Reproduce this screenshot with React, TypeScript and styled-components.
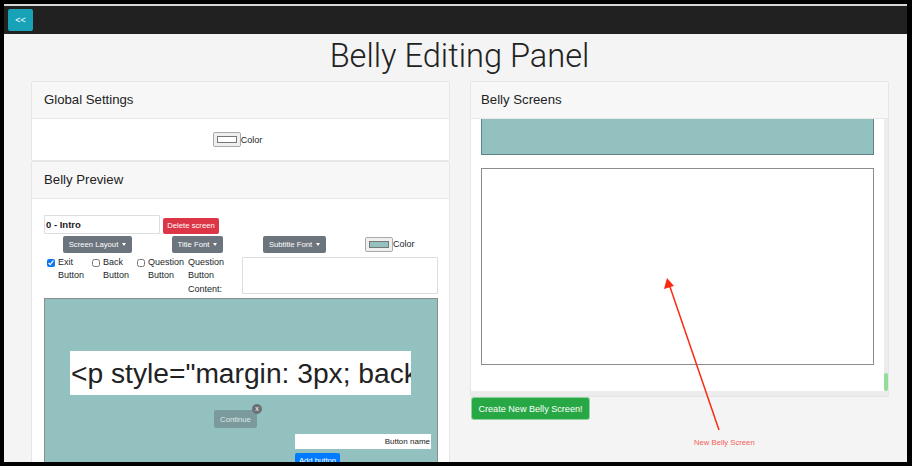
import styled, { createGlobalStyle } from 'styled-components';

const GlobalStyle = createGlobalStyle`
  html, body {
    margin: 0;
    height: 100%;
    background: #000;
    overflow: hidden;
  }
  body {
    font-family: "Liberation Sans", Arial, sans-serif;
    color: #212529;
  }
`;

const Frame = styled.div`
  width: 912px;
  height: 466px;
  box-sizing: border-box;
  padding: 4px 5px 4px 4px;
  background: #000;
`;

const Page = styled.div`
  position: relative;
  height: 100%;
  overflow: hidden;
  background: #f4f4f4;
  border-top: 2px solid #d8d8d8;
  box-sizing: border-box;
`;

const Navbar = styled.div`
  height: 28px;
  background: #212121;
  display: flex;
  align-items: center;
  padding: 0 4px;
  box-sizing: border-box;
`;

const BackButton = styled.button`
  width: 25px;
  height: 22px;
  padding: 0;
  border: 0;
  border-radius: 2px;
  background: #17a2b8;
  color: #fff;
  font: 9px "Liberation Sans", Arial, sans-serif;
`;

const Title = styled.h1`
  margin: 0;
  height: 47px;
  padding-left: 8px;
  text-align: center;
  font-family: Roboto, sans-serif;
  font-weight: 300;
  font-size: 32.6px;
  line-height: 45px;
  color: #222;
`;

const Columns = styled.div`
  display: flex;
  gap: 20px;
  padding-left: 27px;
`;

const Column = styled.div<{ $width: number }>`
  width: ${(p) => p.$width}px;
  flex: none;
`;

const Card = styled.section`
  background: #fff;
  border: 1px solid #e6e6e6;
  border-radius: 2px;
  box-sizing: border-box;
  margin-bottom: 0;
`;

const CardHeader = styled.h2<{ $inset?: number }>`
  margin: 0;
  height: 36px;
  padding-left: ${(p) => p.$inset ?? 12}px;
  background: #f7f7f8;
  border-bottom: 1px solid #e8e8e8;
  font-weight: 400;
  font-size: 13.2px;
  line-height: 36px;
  box-sizing: content-box;
  color: #222;
`;

const GlobalBody = styled.div`
  height: 41px;
  display: flex;
  align-items: center;
  justify-content: center;
  padding-right: 6px;
`;

const ColorField = styled.div`
  display: flex;
  align-items: center;
  font-size: 9px;
`;

const Swatch = styled.span<{ $color: string }>`
  display: block;
  width: 28px;
  height: 15px;
  box-sizing: border-box;
  border: 1px solid #aaa;
  border-radius: 2px;
  background: #efefef;
  padding: 3px;

  &::after {
    content: '';
    display: block;
    height: 100%;
    border: 1px solid #777;
    box-sizing: border-box;
    background: ${(p) => p.$color};
  }
`;

const PreviewBody = styled.div`
  padding: 15px 11px 0 12px;
`;

const NameRow = styled.div`
  display: flex;
  align-items: center;
  gap: 3px;
  height: 20px;
`;

const NameInput = styled.input`
  width: 116px;
  height: 19px;
  box-sizing: border-box;
  padding: 0 1px;
  border: 1px solid #ddd;
  border-radius: 1px;
  font: bold 9.5px "Liberation Sans", Arial, sans-serif;
  color: #222;
`;

const Btn = styled.button<{ $bg: string }>`
  display: block;
  border: 0;
  border-radius: 2px;
  background: ${(p) => p.$bg};
  color: #fff;
  font: 7.7px "Liberation Sans", Arial, sans-serif;
  white-space: nowrap;
  padding: 0;
`;

const DeleteButton = styled(Btn)`
  width: 56px;
  height: 16px;
  margin-top: 3px;
`;

const ToolRow = styled.div`
  display: flex;
  align-items: center;
  height: 18px;
  margin-top: 1px;
  padding-left: 19px;
`;

const Dropdown = styled(Btn)<{ $width: number; $after: number }>`
  width: ${(p) => p.$width}px;
  height: 17px;
  margin-right: ${(p) => p.$after}px;
  display: flex;
  align-items: center;
  justify-content: center;
  gap: 4px;

  &::after {
    content: '';
    border-top: 3px solid #fff;
    border-left: 2.5px solid transparent;
    border-right: 2.5px solid transparent;
  }
`;

const OptionsRow = styled.div`
  display: flex;
  margin-top: 3px;
  height: 42px;
`;

const CheckOption = styled.label<{ $width: number }>`
  width: ${(p) => p.$width}px;
  flex: none;
  display: flex;
  box-sizing: border-box;
  padding-left: 3px;
  font-size: 9px;
  line-height: 13.4px;
`;

const CheckBox = styled.input`
  width: 8px;
  height: 8px;
  margin: 3px 3px 0 0;
  flex: none;
  accent-color: #0a76f6;
`;

const ContentLabel = styled.div`
  width: 54px;
  flex: none;
  font-size: 9px;
  line-height: 13.4px;
`;

const ContentArea = styled.div`
  width: 196px;
  height: 37px;
  margin-top: 1px;
  box-sizing: border-box;
  border: 1px solid #ddd;
  border-radius: 1px;
  background: #fff;
`;

const Preview = styled.div`
  height: 230px;
  box-sizing: border-box;
  padding-top: 52px;
  border: 1px solid #8c8c8c;
  background: #92c1c0;
`;

const PreviewText = styled.div`
  width: 341px;
  height: 44px;
  margin-left: 25px;
  padding-left: 1px;
  box-sizing: border-box;
  background: #fff;
  overflow: hidden;
  white-space: nowrap;
  font-size: 28.2px;
  line-height: 44px;
  color: #222;
`;

const ContinueWrap = styled.div`
  position: relative;
  width: 43px;
  height: 18px;
  margin: 15px 0 0 169px;
`;

const ContinueButton = styled(Btn)`
  width: 100%;
  height: 100%;
  color: #dce8e7;
`;

const CloseBadge = styled.span`
  position: absolute;
  top: -6px;
  right: -5px;
  width: 10px;
  height: 10px;
  border-radius: 50%;
  background: #6c6f76;
  color: #fff;
  font-size: 7px;
  line-height: 10px;
  text-align: center;
`;

const ButtonName = styled.input`
  display: block;
  width: 136px;
  height: 15px;
  margin: 6px 0 0 250px;
  padding: 0 1px;
  box-sizing: border-box;
  border: 0;
  background: #fff;
  text-align: right;
  font: 8px "Liberation Sans", Arial, sans-serif;

  &::placeholder {
    color: #222;
    opacity: 1;
  }
`;

const AddButton = styled(Btn)`
  width: 45px;
  height: 14px;
  margin: 4px 0 0 250px;
`;

const Scroller = styled.div`
  position: relative;
  height: 277px;
  overflow: hidden;
  padding: 0 14px 0 10px;
  box-sizing: border-box;
`;

const ScreenThumb = styled.div<{ $bg: string; $height: number; $color: string }>`
  height: ${(p) => p.$height}px;
  box-sizing: border-box;
  background: ${(p) => p.$bg};
  border: 1px solid ${(p) => p.$color};
  margin-bottom: 13px;
`;

const TopThumb = styled(ScreenThumb)`
  border-top: 0;
`;

const TrackRight = styled.div`
  position: absolute;
  top: 0;
  right: 0;
  bottom: 0;
  width: 4px;
  background: #ececec;
`;

const ThumbRight = styled.div`
  position: absolute;
  right: 0;
  bottom: 5px;
  width: 4px;
  height: 18px;
  border-radius: 2px;
  background: #92dc9a;
`;

const TrackBottom = styled.div`
  position: absolute;
  left: 0;
  right: 4px;
  bottom: 0;
  height: 5px;
  background: #ececec;
`;

const CreateButton = styled(Btn)`
  width: 117px;
  height: 21px;
  margin: 1px 0 0 2px;
  box-shadow: 0 0 0 1px #8fd3a0;
  font-size: 9.1px;
`;

const Annotation = styled.svg`
  position: absolute;
  left: 650px;
  top: 264px;
  width: 80px;
  height: 170px;
  overflow: visible;
`;

const AnnotationLabel = styled.span`
  position: absolute;
  left: 690px;
  top: 432px;
  font-size: 7.7px;
  color: #f4605a;
  white-space: nowrap;
`;

export default function App() {
  return (
    <>
      <GlobalStyle />
      <Frame>
        <Page>
          <Navbar>
            <BackButton>&lt;&lt;</BackButton>
          </Navbar>
          <Title>Belly Editing Panel</Title>
          <Columns>
            <Column $width={419}>
              <Card>
                <CardHeader>Global Settings</CardHeader>
                <GlobalBody>
                  <ColorField>
                    <Swatch $color="#fff" />
                    Color
                  </ColorField>
                </GlobalBody>
              </Card>
              <Card>
                <CardHeader>Belly Preview</CardHeader>
                <PreviewBody>
                  <NameRow>
                    <NameInput defaultValue="0 - Intro" />
                    <DeleteButton $bg="#dc3545">Delete screen</DeleteButton>
                  </NameRow>
                  <ToolRow>
                    <Dropdown $bg="#6c757d" $width={69} $after={40}>Screen Layout</Dropdown>
                    <Dropdown $bg="#6c757d" $width={51} $after={40}>Title Font</Dropdown>
                    <Dropdown $bg="#6c757d" $width={63} $after={39}>Subtitle Font</Dropdown>
                    <ColorField>
                      <Swatch $color="#92c1c0" />
                      Color
                    </ColorField>
                  </ToolRow>
                  <OptionsRow>
                    <CheckOption $width={45}>
                      <CheckBox type="checkbox" defaultChecked />
                      <span>Exit<br />Button</span>
                    </CheckOption>
                    <CheckOption $width={45}>
                      <CheckBox type="checkbox" />
                      <span>Back<br />Button</span>
                    </CheckOption>
                    <CheckOption $width={54}>
                      <CheckBox type="checkbox" />
                      <span>Question<br />Button</span>
                    </CheckOption>
                    <ContentLabel>Question<br />Button<br />Content:</ContentLabel>
                    <ContentArea />
                  </OptionsRow>
                  <Preview>
                    <PreviewText>&lt;p style="margin: 3px; background</PreviewText>
                    <ContinueWrap>
                      <ContinueButton $bg="#7b9a9c">Continue</ContinueButton>
                      <CloseBadge>x</CloseBadge>
                    </ContinueWrap>
                    <ButtonName placeholder="Button name" />
                    <AddButton $bg="#007bff">Add button</AddButton>
                  </Preview>
                </PreviewBody>
              </Card>
            </Column>
            <Column $width={419}>
              <Card>
                <CardHeader $inset={10}>Belly Screens</CardHeader>
                <Scroller>
                  <TopThumb $bg="#92c1c0" $height={36} $color="#5f8487" />
                  <ScreenThumb $bg="#fff" $height={197} $color="#8c8c8c" />
                  <TrackRight />
                  <ThumbRight />
                  <TrackBottom />
                </Scroller>
              </Card>
              <CreateButton $bg="#28a745">Create New Belly Screen!</CreateButton>
            </Column>
          </Columns>
          <Annotation viewBox="0 0 80 170" aria-hidden="true">
            <line x1="65" y1="160" x2="15" y2="14" stroke="#fb2a12" strokeWidth="1.5" />
            <polygon points="13,8 10,19 20,16" fill="#fb2a12" />
          </Annotation>
          <AnnotationLabel>New Belly Screen</AnnotationLabel>
        </Page>
      </Frame>
    </>
  );
}
